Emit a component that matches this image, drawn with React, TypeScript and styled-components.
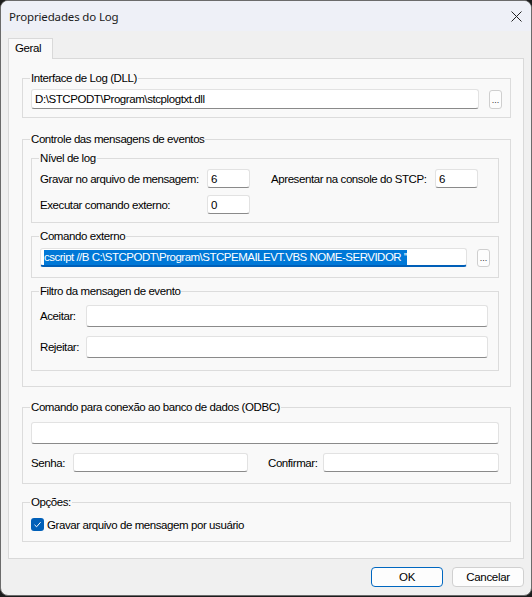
import React from "react";
import styled, { createGlobalStyle } from "styled-components";

const GlobalStyle = createGlobalStyle`
  html, body {
    margin: 0;
    padding: 0;
    background: #1c1c1c;
  }
  body {
    font-family: "Liberation Sans", Arial, sans-serif;
    font-size: 11.5px;
    letter-spacing: -0.42px;
    color: #000;
  }
`;

const Window = styled.div`
  width: 532px;
  height: 596px;
  box-sizing: border-box;
  border: 1px solid #6b6b6b;
  border-radius: 8px;
  overflow: hidden;
  background: #f0f0f0;
  display: flex;
  flex-direction: column;
`;

const TitleBar = styled.div`
  height: 30px;
  flex: none;
  background: #eef0f7;
  display: flex;
  align-items: center;
  justify-content: space-between;
  padding-left: 8px;
  font-family: "Noto Sans", "Open Sans", sans-serif;
  font-size: 11.5px;
  letter-spacing: -0.15px;
  color: #1a1a1a;
`;

const CloseIcon = styled.svg`
  width: 11px;
  height: 11px;
  margin-right: 9px;
`;

const Body = styled.div`
  flex: 1;
  padding: 7px 7px 0 7px;
  display: flex;
  flex-direction: column;
`;

const TabStrip = styled.div`
  display: flex;
  height: 20px;
`;

const Tab = styled.div`
  position: relative;
  z-index: 1;
  box-sizing: border-box;
  width: 45px;
  height: 21px;
  border: 1px solid #d9d9d9;
  border-bottom: none;
  background: #f9f9f9;
  padding: 3px 0 0 6px;
`;

const Panel = styled.div`
  box-sizing: border-box;
  width: 516px;
  height: 501px;
  border: 1px solid #d9d9d9;
  background: #f9f9f9;
  padding: 12px 12px 16px 13px;
  display: flex;
  flex-direction: column;
`;

const Group = styled.fieldset<{ $pad: string; $gap?: number }>`
  margin: ${(p) => p.$gap ?? 0}px 0 0 0;
  min-inline-size: 0;
  border: 1px solid #dcdcdc;
  padding: ${(p) => p.$pad};
`;

const Legend = styled.legend`
  padding: 0 1px;
  margin-left: -1px;
  line-height: 14px;
  color: #000;
`;

const Row = styled.div<{ $gap?: number }>`
  display: flex;
  align-items: center;
  margin-top: ${(p) => p.$gap ?? 0}px;
`;

const TextBox = styled.div<{ $w?: number; $h: number; $focus?: boolean }>`
  box-sizing: border-box;
  ${(p) => (p.$w ? `width: ${p.$w}px;` : "flex: 1;")}
  height: ${(p) => p.$h}px;
  background: #fff;
  border: 1px solid #e2e2e2;
  border-bottom: ${(p) => (p.$focus ? "2px solid #005fb8" : "1px solid #8a8a8a")};
  border-radius: 3px;
  padding-left: 3px;
  display: flex;
  align-items: center;
  white-space: nowrap;
  overflow: hidden;
`;

const Selected = styled.span`
  background: #0078d7;
  color: #fff;
  line-height: 15px;
  letter-spacing: -0.5px;
`;

const Browse = styled.div<{ $h: number }>`
  box-sizing: border-box;
  width: 13px;
  height: ${(p) => p.$h}px;
  margin-left: 10px;
  border: 1px solid #cfcfcf;
  border-radius: 3px;
  background: #fdfdfd;
  font-size: 9px;
  line-height: 9px;
  letter-spacing: 0;
  display: flex;
  align-items: flex-end;
  justify-content: center;
  padding-bottom: 3px;
  color: #333;
`;

const Label = styled.span<{ $w: number }>`
  width: ${(p) => p.$w}px;
  flex: none;
`;

const LevelGrid = styled.div`
  display: grid;
  grid-template-columns: 167px 43px 21px 164px 43px;
  grid-auto-rows: 19px;
  row-gap: 7px;
  align-items: center;
`;

const Check = styled.span`
  box-sizing: border-box;
  width: 13px;
  height: 13px;
  border-radius: 3px;
  background: #005fb8;
  display: inline-flex;
  align-items: center;
  justify-content: center;
  margin-right: 3px;
`;

const Footer = styled.div`
  display: flex;
  justify-content: flex-end;
  gap: 9px;
  margin-top: 8px;
`;

const Button = styled.button<{ $primary?: boolean }>`
  box-sizing: border-box;
  width: 72px;
  height: 20px;
  border: 1px solid ${(p) => (p.$primary ? "#0067c0" : "#d0d0d0")};
  border-radius: 4px;
  background: #fdfdfd;
  font-family: "Liberation Sans", Arial, sans-serif;
  font-size: 11.5px;
  letter-spacing: -0.3px;
  color: #000;
  padding: 0;
`;

export default function App() {
  return (
    <>
      <GlobalStyle />
      <Window>
        <TitleBar>
          <span>Propriedades do Log</span>
          <CloseIcon viewBox="0 0 11 11">
            <path d="M0.5 0.5 L10.5 10.5 M10.5 0.5 L0.5 10.5" stroke="#222" strokeWidth="1" />
          </CloseIcon>
        </TitleBar>
        <Body>
          <TabStrip>
            <Tab>Geral</Tab>
          </TabStrip>
          <Panel>
            <Group $pad="4px 8px 8px 8px">
              <Legend>Interface de Log (DLL)</Legend>
              <Row>
                <TextBox $h={20}>D:\STCPODT\Program\stcplogtxt.dll</TextBox>
                <Browse $h={19}>...</Browse>
              </Row>
            </Group>

            <Group $pad="5px 11px 15px 8px" $gap={14}>
              <Legend>Controle das mensagens de eventos</Legend>

              <Group $pad="4px 8px 8px 8px">
                <Legend>Nível de log</Legend>
                <LevelGrid>
                  <span>Gravar no arquivo de mensagem:</span>
                  <TextBox $w={43} $h={19}>6</TextBox>
                  <span />
                  <span>Apresentar na console do STCP:</span>
                  <TextBox $w={43} $h={19}>6</TextBox>
                  <span>Executar comando externo:</span>
                  <TextBox $w={43} $h={19}>0</TextBox>
                </LevelGrid>
              </Group>

              <Group $pad="5px 8px 10px 8px" $gap={6}>
                <Legend>Comando externo</Legend>
                <Row>
                  <TextBox $w={427} $h={19} $focus>
                    <Selected>cscript //B C:\STCPODT\Program\STCPEMAILEVT.VBS NOME-SERVIDOR ''</Selected>
                  </TextBox>
                  <Browse $h={18}>...</Browse>
                </Row>
              </Group>

              <Group $pad="7px 10px 12px 8px" $gap={6}>
                <Legend>Filtro da mensagen de evento</Legend>
                <Row>
                  <Label $w={46}>Aceitar:</Label>
                  <TextBox $h={22} />
                </Row>
                <Row $gap={9}>
                  <Label $w={46}>Rejeitar:</Label>
                  <TextBox $h={22} />
                </Row>
              </Group>
            </Group>

            <Group $pad="8px 11px 11px 8px" $gap={13}>
              <Legend>Comando para conexão ao banco de dados (ODBC)</Legend>
              <Row>
                <TextBox $h={22} />
              </Row>
              <Row $gap={9}>
                <Label $w={42}>Senha:</Label>
                <TextBox $w={175} $h={19} />
                <Label $w={20} />
                <Label $w={55}>Confirmar:</Label>
                <TextBox $h={19} />
              </Row>
            </Group>

            <Group $pad="9px 11px 10px 8px" $gap={11}>
              <Legend>Opções:</Legend>
              <Row>
                <Check>
                  <svg width="9" height="9" viewBox="0 0 9 9">
                    <path d="M1.5 4.8 L3.6 6.8 L7.6 2.2" fill="none" stroke="#fff" strokeWidth="1" />
                  </svg>
                </Check>
                <span>Gravar arquivo de mensagem por usuário</span>
              </Row>
            </Group>
          </Panel>
          <Footer>
            <Button $primary>OK</Button>
            <Button>Cancelar</Button>
          </Footer>
        </Body>
      </Window>
    </>
  );
}
